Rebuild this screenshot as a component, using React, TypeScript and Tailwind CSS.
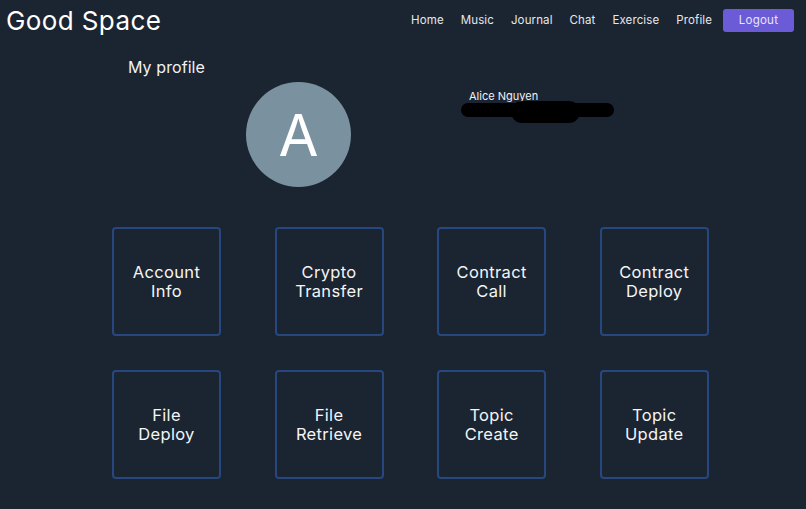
import React from 'react';

const navLinks = ['Home', 'Music', 'Journal', 'Chat', 'Exercise', 'Profile'];

const actions = [
  ['Account', 'Info'],
  ['Crypto', 'Transfer'],
  ['Contract', 'Call'],
  ['Contract', 'Deploy'],
  ['File', 'Deploy'],
  ['File', 'Retrieve'],
  ['Topic', 'Create'],
  ['Topic', 'Update'],
];

const App: React.FC = () => {
  return (
    <div className="h-[509px] w-[806px] overflow-hidden bg-[#1b2431] text-white font-['Inter',sans-serif]">
      {/* Header */}
      <header className="flex h-[41px] items-center justify-between pl-[6px] pr-[12px]">
        <h1 className="text-[26px] font-normal leading-none tracking-[0.015em] text-white">Good Space</h1>
        <nav className="flex items-center gap-[17px]">
          {navLinks.map((link) => (
            <a key={link} className="text-[11.5px] tracking-[0.01em] text-[#e6e8ea]">
              {link}
            </a>
          ))}
          <button className="-ml-[6px] h-[23px] w-[71px] rounded-[3px] bg-[#6b5bd6] text-[11.5px] tracking-[0.02em] text-[#e9e6fa]">
            Logout
          </button>
        </nav>
      </header>

      {/* Profile */}
      <section className="h-[186px] pl-[128px] pt-[16px]">
        <h2 className="text-[16px] leading-5 tracking-[0.005em] text-[#f1f2f3]">My profile</h2>
        <div className="mt-[5px] flex items-start">
          <div className="ml-[118px] flex h-[105px] w-[105px] items-center justify-center rounded-full bg-[#7a929f] text-[58px] font-normal leading-none text-white">
            A
          </div>
          <div className="relative ml-[118px] mt-[6px] text-[11px] leading-4 text-[#f1f2f3]">
            Alice Nguyen
            <div className="absolute left-[-8px] top-[15px] h-[14px] w-[153px] rounded-full bg-black" />
            <div className="absolute left-[42px] top-[13px] h-[22px] w-[69px] rounded-full bg-black" />
          </div>
        </div>
      </section>

      {/* Action grid */}
      <main className="ml-[112px] grid w-[597px] grid-cols-4 gap-x-[53.3px] gap-y-[34px]">
        {actions.map(([top, bottom]) => (
          <button
            key={top + bottom}
            className="flex h-[109px] w-[109px] flex-col items-center justify-center rounded-[4px] border-2 border-[#27487f] text-[16.5px] leading-[19px] tracking-[0.02em] text-[#f4f5f6]"
          >
            <span>{top}</span>
            <span>{bottom}</span>
          </button>
        ))}
      </main>
    </div>
  );
};

export default App;
